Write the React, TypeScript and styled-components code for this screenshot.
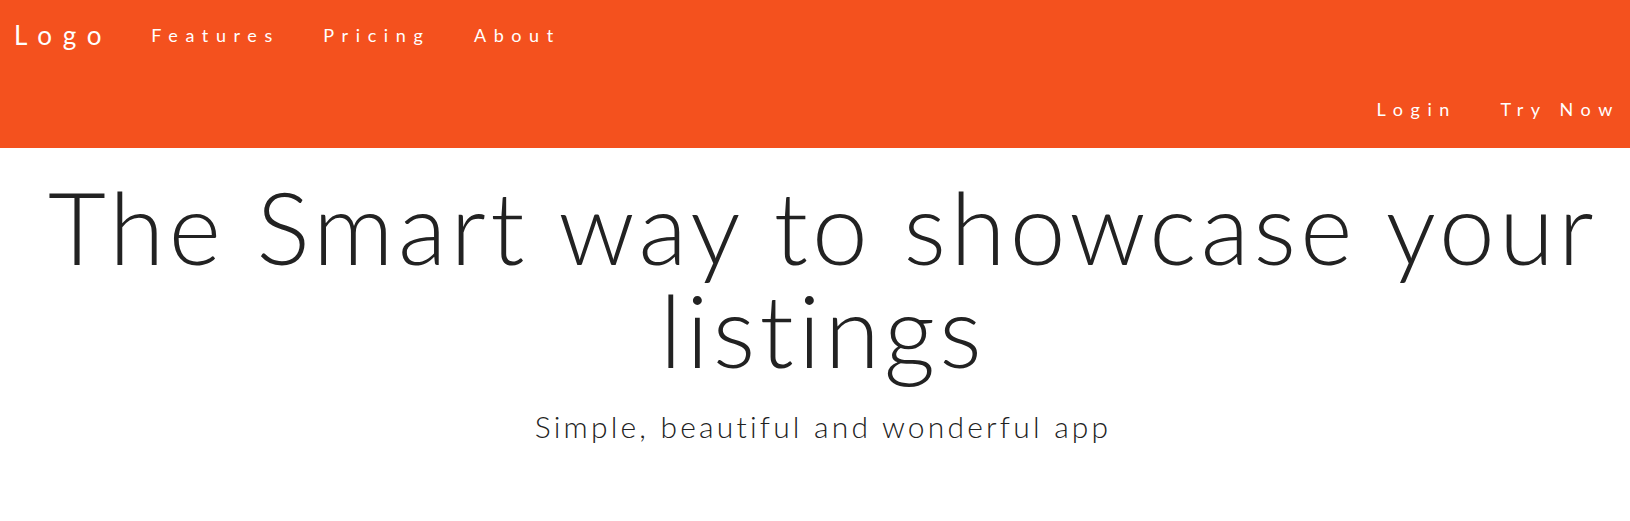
import React from "react";
import styled, { createGlobalStyle } from "styled-components";

const GlobalStyle = createGlobalStyle`
  html, body {
    margin: 0;
    padding: 0;
    background: #ffffff;
  }
  body {
    font-family: "Lato", "Open Sans", "Liberation Sans", sans-serif;
    color: #222222;
  }
  * { box-sizing: border-box; }
`;

const Header = styled.header`
  background: #f4511e;
  height: 148px;
  display: flex;
  flex-direction: column;
  color: #ffffff;
`;

const TopRow = styled.div`
  display: flex;
  align-items: center;
  height: 70px;
  padding-left: 14px;
  gap: 39px;
`;

const LinkGroup = styled.nav<{ $end?: boolean }>`
  display: flex;
  align-items: center;
  gap: 43.5px;
  ${({ $end }) => ($end ? "justify-content: flex-end;" : "")}
`;

const BottomRow = styled.div`
  display: flex;
  align-items: center;
  justify-content: flex-end;
  height: 78px;
  padding-right: 10px;
`;

const Logo = styled.a`
  font-size: 26px;
  line-height: 26px;
  font-weight: 400;
  letter-spacing: 10.8px;
  color: #ffffff;
  text-decoration: none;
`;

const NavLink = styled.a`
  font-size: 18px;
  line-height: 18px;
  font-weight: 400;
  letter-spacing: 7.6px;
  color: #ffffff;
  text-decoration: none;
`;

const Hero = styled.section`
  padding-left: 16px;
  text-align: center;
`;

const Title = styled.h1`
  margin: 27px 0 0;
  font-size: 100px;
  line-height: 103px;
  font-weight: 300;
  letter-spacing: 4.3px;
  color: #222222;
`;

const Subtitle = styled.p`
  margin: 27px 0 0;
  font-size: 30px;
  line-height: 36px;
  font-weight: 300;
  letter-spacing: 3.2px;
  color: #222222;
`;

export default function App() {
  return (
    <>
      <GlobalStyle />
      <Header>
        <TopRow>
          <Logo href="#">Logo</Logo>
          <LinkGroup>
            <NavLink href="#">Features</NavLink>
            <NavLink href="#">Pricing</NavLink>
            <NavLink href="#">About</NavLink>
          </LinkGroup>
        </TopRow>
        <BottomRow>
          <LinkGroup $end>
            <NavLink href="#">Login</NavLink>
            <NavLink href="#">Try Now</NavLink>
          </LinkGroup>
        </BottomRow>
      </Header>
      <Hero>
        <Title>
          The Smart way to showcase your
          <br />
          listings
        </Title>
        <Subtitle>Simple, beautiful and wonderful app</Subtitle>
      </Hero>
    </>
  );
}
